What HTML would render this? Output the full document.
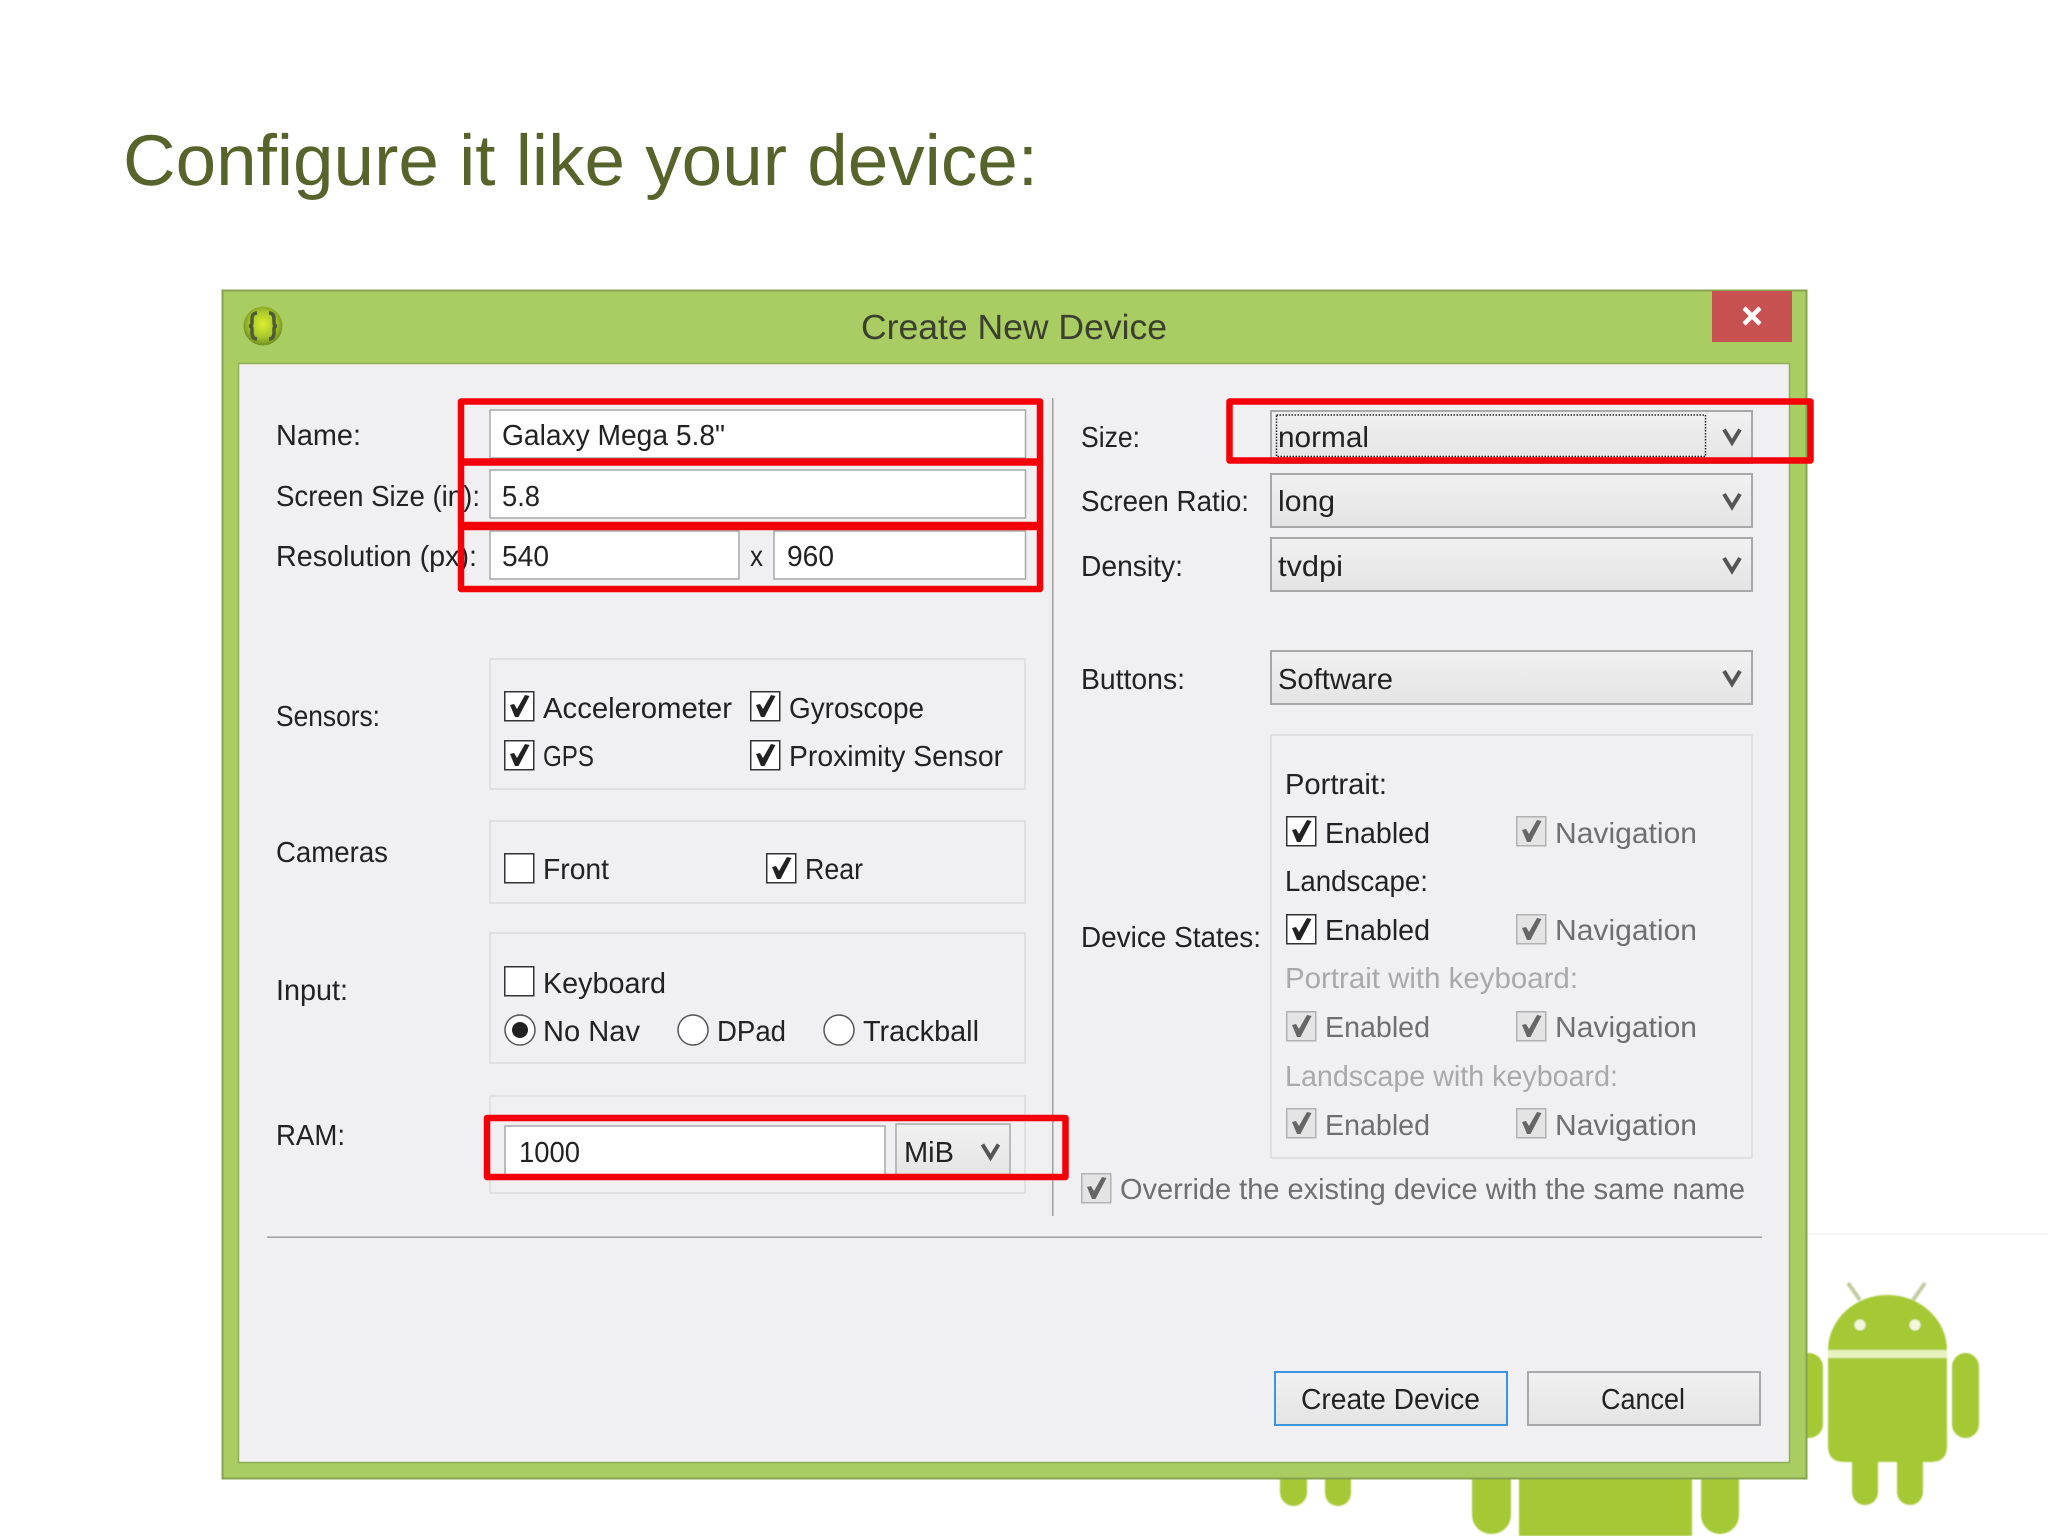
<!DOCTYPE html>
<html><head><meta charset="utf-8"><title>Configure it like your device</title>
<style>
html,body{margin:0;padding:0;background:#fff;width:2048px;height:1536px;overflow:hidden}
svg{display:block}
text{font-family:"Liberation Sans",sans-serif;font-size:29px;fill:#222;text-rendering:geometricPrecision}
.g{fill:#6f6f6f}.l{fill:#a9a9a9}
</style></head><body>
<svg width="2048" height="1536" viewBox="0 0 2048 1536" xmlns="http://www.w3.org/2000/svg">
<defs>
<linearGradient id="cb" x1="0" y1="0" x2="0" y2="1"><stop offset="0" stop-color="#f1f1f1"/><stop offset="1" stop-color="#e4e4e4"/></linearGradient>
<radialGradient id="ic" cx=".5" cy=".45" r=".55"><stop offset="0" stop-color="#dcef30"/><stop offset=".6" stop-color="#a8c82a"/><stop offset="1" stop-color="#6f8f20"/></radialGradient>
<filter id="soft" x="-5%" y="-5%" width="110%" height="110%"><feGaussianBlur stdDeviation="0.8"/></filter>
<g id="ck"><rect x=".75" y=".75" width="29" height="29" fill="#fff" stroke="#333" stroke-width="1.5"/><path d="M6 14 L10 13 L13 18 L21 4 L25.5 5 L14.5 26 L11 26 Z" fill="#222"/></g>
<g id="un"><rect x=".75" y=".75" width="29" height="29" fill="#fff" stroke="#333" stroke-width="1.5"/></g>
<g id="dk"><rect x=".75" y=".75" width="29" height="29" fill="#e4e4e4" stroke="#b2b2b2" stroke-width="1.5"/><path d="M6 14 L10 13 L13 18 L21 4 L25.5 5 L14.5 26 L11 26 Z" fill="#666"/></g>
<path id="ch" d="M-8 -7 L0 6 L8 -7" fill="none" stroke="#555" stroke-width="4"/>
</defs>

<rect width="2048" height="1536" fill="#fff"/>
<rect x="1807" y="1233" width="241" height="2" fill="#f5f5f5"/>

<text x="123" y="185" textLength="915" lengthAdjust="spacingAndGlyphs" style="font-size:72px;fill:#56632a">Configure it like your device:</text>

<!-- Android robots -->
<g filter="url(#soft)">
<g fill="#a5c936">
<rect x="1783" y="1353" width="40" height="85" rx="14"/>
<rect x="1952" y="1353" width="27" height="85" rx="13.5"/>
<path d="M1828 1350 A59.5 55 0 0 1 1947 1350 Z"/>
<path d="M1828 1358 H1947 V1446 Q1947 1462 1931 1462 H1923 V1492 A13 13 0 0 1 1897 1492 V1462 H1878 V1492 A13 13 0 0 1 1852 1492 V1462 H1844 Q1828 1462 1828 1446 Z"/>
<rect x="1280" y="1440" width="27" height="66" rx="13.5"/>
<rect x="1325" y="1440" width="26" height="66" rx="13"/>
<rect x="1472" y="1440" width="39" height="94" rx="19"/>
<rect x="1701" y="1440" width="38" height="94" rx="19"/>
<rect x="1519" y="1440" width="173" height="96"/>
</g>
<rect x="1828" y="1350" width="119" height="8" fill="#e8f2bc"/>
<path d="M1848 1283 L1860 1300 M1925 1283 L1913 1300" stroke="#c2ccA0" stroke-width="4"/>
<circle cx="1860" cy="1325" r="5.5" fill="#f4f7dc"/><circle cx="1915" cy="1325" r="5.5" fill="#f4f7dc"/>
</g>

<!-- Dialog -->
<rect x="222.5" y="290.5" width="1584" height="1188" fill="#a9cd62" stroke="#86a34f" stroke-width="2"/>
<rect x="238.5" y="363.5" width="1551" height="1099" fill="#f0f0f2" stroke="#8fae55" stroke-width="1.5"/>
<rect x="1712" y="291" width="80" height="51" fill="#c75050"/>
<path d="M1744 308 L1760 324 M1760 308 L1744 324" stroke="#fff" stroke-width="4.5"/>
<circle cx="263" cy="326" r="19.5" fill="url(#ic)"/>
<path d="M257 313 Q252 313 252 319 V323 Q252 326 249 326 Q252 326 252 329 V333 Q252 339 257 339 M269 313 Q274 313 274 319 V323 Q274 326 277 326 Q274 326 274 329 V333 Q274 339 269 339" fill="none" stroke="#4f5a3a" stroke-width="3.5"/>
<text x="861" y="339" textLength="306" lengthAdjust="spacingAndGlyphs" style="font-size:35px;fill:#3a3f30">Create New Device</text>

<!-- separators -->
<rect x="1052" y="398" width="1.5" height="818" fill="#a0a0a0"/>
<rect x="267" y="1236.5" width="1495" height="1.5" fill="#a0a0a0"/>

<!-- left labels -->
<text x="276" y="445" textLength="85" lengthAdjust="spacingAndGlyphs">Name:</text>
<text x="276" y="506" textLength="204" lengthAdjust="spacingAndGlyphs">Screen Size (in):</text>
<text x="276" y="566" textLength="201" lengthAdjust="spacingAndGlyphs">Resolution (px):</text>
<text x="276" y="726" textLength="104" lengthAdjust="spacingAndGlyphs">Sensors:</text>
<text x="276" y="862" textLength="112" lengthAdjust="spacingAndGlyphs">Cameras</text>
<text x="276" y="1000" textLength="72" lengthAdjust="spacingAndGlyphs">Input:</text>
<text x="276" y="1145" textLength="69" lengthAdjust="spacingAndGlyphs">RAM:</text>

<!-- fields -->
<g fill="#fff" stroke="#a8a8a8" stroke-width="1.5">
<rect x="490" y="410" width="535.5" height="48"/>
<rect x="490" y="470" width="535.5" height="48"/>
<rect x="490" y="531" width="249" height="48"/>
<rect x="774" y="531" width="251.5" height="48"/>
</g>
<text x="502" y="445" textLength="223" lengthAdjust="spacingAndGlyphs">Galaxy Mega 5.8"</text>
<text x="502" y="506" textLength="38" lengthAdjust="spacingAndGlyphs">5.8</text>
<text x="502" y="566" textLength="47" lengthAdjust="spacingAndGlyphs">540</text>
<text x="750" y="566" textLength="13" lengthAdjust="spacingAndGlyphs">x</text>
<text x="787" y="566" textLength="47" lengthAdjust="spacingAndGlyphs">960</text>

<!-- groups -->
<g fill="none" stroke="#dcdcde" stroke-width="1.5">
<rect x="490" y="659" width="535" height="130"/>
<rect x="490" y="821" width="535" height="82"/>
<rect x="490" y="933" width="535" height="130"/>
<rect x="490" y="1096" width="535" height="97"/>
<rect x="1271" y="735" width="481" height="423"/>
</g>

<!-- sensors -->
<use href="#ck" x="504" y="691"/><text x="543" y="718" textLength="189" lengthAdjust="spacingAndGlyphs">Accelerometer</text>
<use href="#ck" x="750" y="691"/><text x="789" y="718" textLength="135" lengthAdjust="spacingAndGlyphs">Gyroscope</text>
<use href="#ck" x="504" y="740"/><text x="543" y="766" textLength="51" lengthAdjust="spacingAndGlyphs">GPS</text>
<use href="#ck" x="750" y="740"/><text x="789" y="766" textLength="214" lengthAdjust="spacingAndGlyphs">Proximity Sensor</text>
<!-- cameras -->
<use href="#un" x="504" y="853"/><text x="543" y="879" textLength="66" lengthAdjust="spacingAndGlyphs">Front</text>
<use href="#ck" x="766" y="853"/><text x="805" y="879" textLength="58" lengthAdjust="spacingAndGlyphs">Rear</text>
<!-- input -->
<use href="#un" x="504" y="966"/><text x="543" y="993" textLength="123" lengthAdjust="spacingAndGlyphs">Keyboard</text>
<g fill="#fff" stroke="#555" stroke-width="1.5">
<circle cx="520" cy="1030" r="15"/><circle cx="693" cy="1030" r="15"/><circle cx="839" cy="1030" r="15"/>
</g>
<circle cx="520" cy="1030" r="8" fill="#222"/>
<text x="543" y="1041" textLength="97" lengthAdjust="spacingAndGlyphs">No Nav</text>
<text x="717" y="1041" textLength="69" lengthAdjust="spacingAndGlyphs">DPad</text>
<text x="863" y="1041" textLength="116" lengthAdjust="spacingAndGlyphs">Trackball</text>
<!-- RAM -->
<rect x="505" y="1126" width="380" height="52" fill="#fff" stroke="#a8a8a8" stroke-width="1.5"/>
<rect x="896" y="1124" width="114" height="54" fill="url(#cb)" stroke="#a8a8a8" stroke-width="1.5"/>
<text x="519" y="1162" textLength="61" lengthAdjust="spacingAndGlyphs">1000</text>
<text x="904" y="1162" textLength="50" lengthAdjust="spacingAndGlyphs">MiB</text>
<use href="#ch" x="990.5" y="1151.5"/>

<!-- right labels -->
<text x="1081" y="447" textLength="59" lengthAdjust="spacingAndGlyphs">Size:</text>
<text x="1081" y="511" textLength="168" lengthAdjust="spacingAndGlyphs">Screen Ratio:</text>
<text x="1081" y="576" textLength="102" lengthAdjust="spacingAndGlyphs">Density:</text>
<text x="1081" y="689" textLength="104" lengthAdjust="spacingAndGlyphs">Buttons:</text>
<text x="1081" y="947" textLength="180" lengthAdjust="spacingAndGlyphs">Device States:</text>

<!-- combos -->
<g fill="url(#cb)" stroke="#a8a8a8" stroke-width="2">
<rect x="1271" y="411" width="481" height="52"/>
<rect x="1271" y="474" width="481" height="53"/>
<rect x="1271" y="538" width="481" height="53"/>
<rect x="1271" y="651" width="481" height="53"/>
</g>
<rect x="1276.5" y="415" width="429" height="41.5" fill="none" stroke="#222" stroke-width="1.5" stroke-dasharray="1.5 1.5"/>
<text x="1278" y="447" textLength="91" lengthAdjust="spacingAndGlyphs">normal</text>
<text x="1278" y="511" textLength="57" lengthAdjust="spacingAndGlyphs">long</text>
<text x="1278" y="576" textLength="65" lengthAdjust="spacingAndGlyphs">tvdpi</text>
<text x="1278" y="689" textLength="115" lengthAdjust="spacingAndGlyphs">Software</text>
<use href="#ch" x="1732" y="436.5"/><use href="#ch" x="1732" y="501"/><use href="#ch" x="1732" y="565"/><use href="#ch" x="1732" y="678"/>

<!-- device states -->
<text x="1285" y="794" textLength="102" lengthAdjust="spacingAndGlyphs">Portrait:</text>
<use href="#ck" x="1286" y="816"/><text x="1325" y="843" textLength="105" lengthAdjust="spacingAndGlyphs">Enabled</text>
<use href="#dk" x="1516" y="816"/><text class="g" x="1555" y="843" textLength="142" lengthAdjust="spacingAndGlyphs">Navigation</text>
<text x="1285" y="891" textLength="143" lengthAdjust="spacingAndGlyphs">Landscape:</text>
<use href="#ck" x="1286" y="914"/><text x="1325" y="940" textLength="105" lengthAdjust="spacingAndGlyphs">Enabled</text>
<use href="#dk" x="1516" y="914"/><text class="g" x="1555" y="940" textLength="142" lengthAdjust="spacingAndGlyphs">Navigation</text>
<text class="l" x="1285" y="988" textLength="293" lengthAdjust="spacingAndGlyphs">Portrait with keyboard:</text>
<use href="#dk" x="1286" y="1011"/><text class="g" x="1325" y="1037" textLength="105" lengthAdjust="spacingAndGlyphs">Enabled</text>
<use href="#dk" x="1516" y="1011"/><text class="g" x="1555" y="1037" textLength="142" lengthAdjust="spacingAndGlyphs">Navigation</text>
<text class="l" x="1285" y="1086" textLength="333" lengthAdjust="spacingAndGlyphs">Landscape with keyboard:</text>
<use href="#dk" x="1286" y="1108"/><text class="g" x="1325" y="1135" textLength="105" lengthAdjust="spacingAndGlyphs">Enabled</text>
<use href="#dk" x="1516" y="1108"/><text class="g" x="1555" y="1135" textLength="142" lengthAdjust="spacingAndGlyphs">Navigation</text>
<use href="#dk" x="1081" y="1173"/><text class="g" x="1120" y="1199" textLength="625" lengthAdjust="spacingAndGlyphs">Override the existing device with the same name</text>

<!-- buttons -->
<rect x="1275" y="1372" width="232" height="53" fill="url(#cb)" stroke="#3a95dc" stroke-width="2"/>
<rect x="1528" y="1372" width="232" height="53" fill="url(#cb)" stroke="#a8a8a8" stroke-width="2"/>
<text x="1301" y="1409" textLength="179" lengthAdjust="spacingAndGlyphs">Create Device</text>
<text x="1601" y="1409" textLength="84" lengthAdjust="spacingAndGlyphs">Cancel</text>

<!-- red annotation boxes -->
<g fill="none" stroke="#f40009" stroke-width="6.5" stroke-linejoin="round">
<rect x="461" y="401.5" width="579" height="60"/>
<rect x="461" y="462.5" width="579" height="62.5"/>
<rect x="461" y="527" width="579" height="62"/>
<rect x="1229.5" y="401.5" width="581" height="59"/>
<rect x="487" y="1118" width="578.5" height="59"/>
</g>
</svg>
</body></html>
